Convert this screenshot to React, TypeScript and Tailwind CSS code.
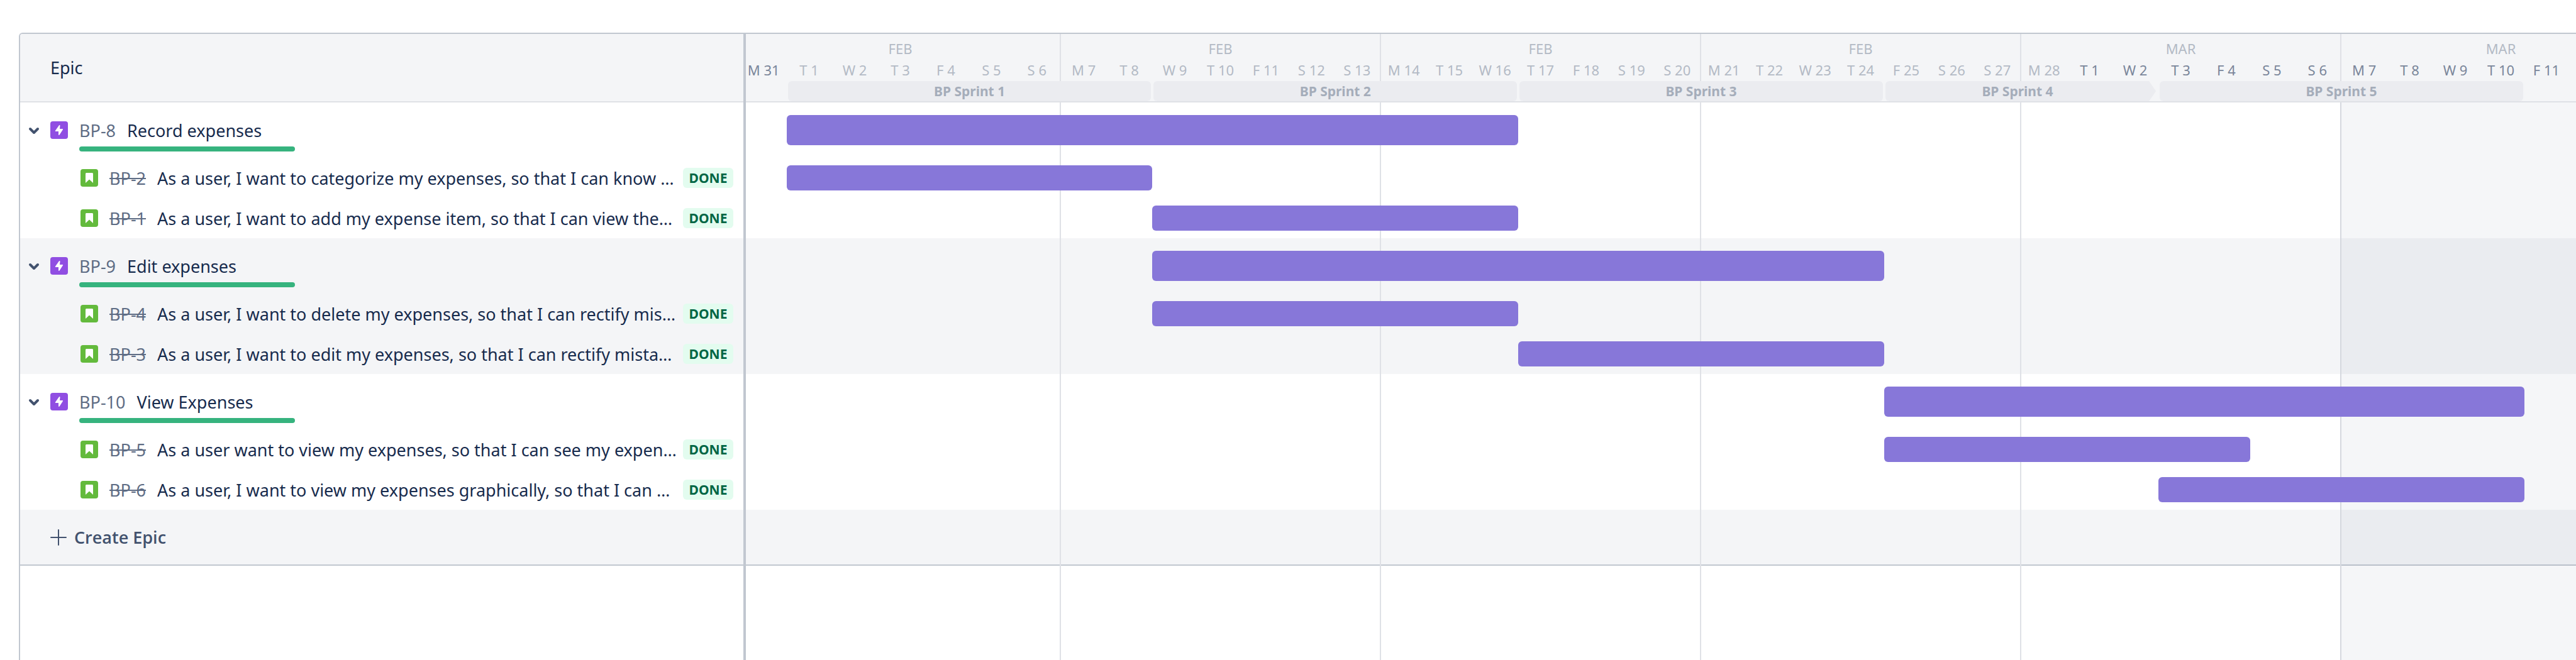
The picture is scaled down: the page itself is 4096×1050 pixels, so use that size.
type Issue = { id: string; title: string; start: number; days: number };
type EpicGroup = Issue & { stories: Issue[] };

// `start` counts days from Monday 31 January, the first column of the track.
const epics: EpicGroup[] = [
  {
    id: 'BP-8', title: 'Record expenses', start: 1, days: 16,
    stories: [
      { id: 'BP-2', title: 'As a user, I want to categorize my expenses, so that I can know …', start: 1, days: 8 },
      { id: 'BP-1', title: 'As a user, I want to add my expense item, so that I can view the…', start: 9, days: 8 },
    ],
  },
  {
    id: 'BP-9', title: 'Edit expenses', start: 9, days: 16,
    stories: [
      { id: 'BP-4', title: 'As a user, I want to delete my expenses, so that I can rectify mis…', start: 9, days: 8 },
      { id: 'BP-3', title: 'As a user, I want to edit my expenses, so that I can rectify mista…', start: 17, days: 8 },
    ],
  },
  {
    id: 'BP-10', title: 'View Expenses', start: 25, days: 14,
    stories: [
      { id: 'BP-5', title: 'As a user want to view my expenses, so that I can see my expen…', start: 25, days: 8 },
      { id: 'BP-6', title: 'As a user, I want to view my expenses graphically, so that I can …', start: 31, days: 8 },
    ],
  },
];

const weeks = [
  { month: 'FEB', days: ['31', '1', '2', '3', '4', '5', '6'] },
  { month: 'FEB', days: ['7', '8', '9', '10', '11', '12', '13'] },
  { month: 'FEB', days: ['14', '15', '16', '17', '18', '19', '20'] },
  { month: 'FEB', days: ['21', '22', '23', '24', '25', '26', '27'] },
  { month: 'MAR', days: ['28', '1', '2', '3', '4', '5', '6'] },
  { month: 'MAR', days: ['7', '8', '9', '10', '11'] },
];
const weekdays = ['M', 'T', 'W', 'T', 'F', 'S', 'S'];

const sprints = [
  { name: 'BP Sprint 1', start: 1, days: 8 },
  { name: 'BP Sprint 2', start: 9, days: 8 },
  { name: 'BP Sprint 3', start: 17, days: 8 },
  { name: 'BP Sprint 4', start: 25, days: 6, cut: true },
  { name: 'BP Sprint 5', start: 31, days: 8 },
];

const isFebruary = (day: number) => day >= 1 && day <= 28;
const column = (start: number, days: number) => ({ gridColumn: `${start + 1} / span ${days}` });

function ChevronIcon() {
  return (
    <svg width="20" height="20" viewBox="0 0 20 20" fill="none" stroke="#42526E" strokeWidth="4" strokeLinecap="round" strokeLinejoin="round" aria-hidden="true">
      <path d="M4 8 10 14 16 8" />
    </svg>
  );
}

function EpicIcon() {
  return (
    <svg className="shrink-0" width="28" height="28" viewBox="0 0 28 28" aria-hidden="true">
      <rect width="28" height="28" rx="4" fill="#904EE2" />
      <path d="M14 6.300c.6-.6 1.500-.3 1.500.5L15 12h4.200c.8 0 1.100.7.7 1.300l-5.300 8.300c-.5.7-1.600.4-1.600-.4V16H8.700c-.8 0-1.100-.7-.7-1.300z" fill="#fff" />
    </svg>
  );
}

function StoryIcon() {
  return (
    <svg className="shrink-0" width="28" height="28" viewBox="0 0 28 28" aria-hidden="true">
      <rect width="28" height="28" rx="4" fill="#63BA3C" />
      <path d="M9.500 6h9c.8 0 1.500.7 1.500 1.500V22l-6-5.500L8 22V7.500C8 6.700 8.700 6 9.500 6z" fill="#fff" />
    </svg>
  );
}

function EpicRow({ epic }: { epic: Issue }) {
  return (
    <div className="flex h-[88px] items-start pt-6 pl-3">
      <button type="button" aria-label={`Collapse ${epic.id}`} className="flex h-10 w-5 items-center">
        <ChevronIcon />
      </button>
      <div className="ml-4 flex h-10 items-center">
        <EpicIcon />
      </div>
      <div className="ml-[18px] flex-1">
        <div className="flex h-10 items-center gap-[18px] whitespace-nowrap">
          <a href="#" className="text-[#5E6C84]">{epic.id}</a>
          <span>{epic.title}</span>
        </div>
        <div role="progressbar" aria-label={`${epic.id} progress`} aria-valuenow={100} className="mt-1.5 h-2 w-[343px] rounded bg-[#36B37E]" />
      </div>
    </div>
  );
}

function StoryRow({ story }: { story: Issue }) {
  return (
    <div className="flex h-16 items-center pr-4 pl-24">
      <StoryIcon />
      <a href="#" className="ml-[18px] text-[#5E6C84] line-through">{story.id}</a>
      <span className="ml-[18px] flex-1 whitespace-nowrap">{story.title}</span>
      <span className="flex h-8 w-20 items-center justify-center rounded-md bg-[#E3FCEF] text-[21px] font-bold text-[#006644]">DONE</span>
    </div>
  );
}

function Bar({ item, epic = false }: { item: Issue; epic?: boolean }) {
  return (
    <div className={`grid grid-cols-[repeat(42,minmax(0,1fr))] items-center ${epic ? 'h-[88px]' : 'h-16'}`}>
      <div
        title={item.id}
        style={column(item.start, item.days)}
        className={`relative rounded-md bg-[#8777D9] ${epic ? 'h-12' : 'h-10'}`}
      />
    </div>
  );
}

function EpicPanel() {
  return (
    <section aria-label="Epics" className="flex w-[1152px] shrink-0 flex-col overflow-hidden rounded-tl-md border-t-2 border-l-2 border-[#C1C7D0]">
      <div className="flex h-[109px] items-center border-b-2 border-[#DFE1E6] bg-[#F4F5F7] pl-12">Epic</div>
      {epics.map((epic, i) => (
        <div key={epic.id} className={i % 2 ? 'bg-[#F4F5F7]' : 'bg-white'}>
          <EpicRow epic={epic} />
          {epic.stories.map((story) => <StoryRow key={story.id} story={story} />)}
        </div>
      ))}
      <div className="flex h-[89px] items-center border-b-2 border-[#C1C7D0] bg-[#F4F5F7] pl-12">
        <button type="button" className="flex items-center gap-3 font-['Open_Sans',sans-serif] font-semibold text-[#42526E]">
          <svg width="26" height="26" viewBox="0 0 26 26" stroke="#42526E" strokeWidth="2" strokeLinecap="round" aria-hidden="true">
            <path d="M13 1v24M1 13h24" />
          </svg>
          Create Epic
        </button>
      </div>
    </section>
  );
}

function TimelineHeader() {
  return (
    <div className="border-b-2 border-[#DFE1E6] bg-[#F4F5F7]">
      <div className="grid grid-cols-6">
        {weeks.map((week, w) => (
          <div key={w} className="border-r-2 border-[#DFE1E6] pt-[7px] text-[22px]">
            <div className="flex h-8 items-center justify-center text-[#B3BAC5]">{week.month}</div>
            <div className="grid h-9 grid-cols-7 items-center text-center whitespace-nowrap">
              {week.days.map((day, d) => (
                <span key={day} className={isFebruary(w * 7 + d) ? 'text-[#B3BAC5]' : 'text-[#7A869A]'}>
                  {weekdays[d]} {day}
                </span>
              ))}
            </div>
          </div>
        ))}
      </div>
      <div className="grid grid-cols-[repeat(42,minmax(0,1fr))]">
        {sprints.map((sprint) => (
          <div
            key={sprint.name}
            style={column(sprint.start, sprint.days)}
            className={`mx-0.5 flex h-8 items-center justify-center rounded-md bg-[#EBECF0] text-[21px] font-bold text-[#A5ADBA] ${
              sprint.cut ? 'pr-3 [clip-path:polygon(0_0,calc(100%-13px)_0,calc(100%-2px)_50%,calc(100%-13px)_100%,0_100%)]' : ''
            }`}
          >
            {sprint.name}
          </div>
        ))}
      </div>
    </div>
  );
}

function WeekLines() {
  return (
    <div aria-hidden="true" className="absolute inset-y-0 -left-0.5 grid w-full grid-cols-6">
      {weeks.map((_, w) => (
        <div key={w} className={`border-l-2 ${w === 5 ? 'border-[#D5D8DF] bg-[#091E42]/4' : 'border-[#DFE1E6]'}`} />
      ))}
    </div>
  );
}

function Timeline() {
  return (
    <section aria-label="Timeline" className="flex min-w-0 flex-1 overflow-hidden border-t-2 border-[#C1C7D0]">
      <div className="-ml-2 flex w-[3054px] shrink-0 flex-col">
        <TimelineHeader />
        <div className="relative flex-1">
          {epics.map((epic, i) => (
            <div key={epic.id} className={`h-[216px] ${i % 2 ? 'bg-[#F4F5F7]' : 'bg-white'}`} />
          ))}
          <div className="h-[89px] border-b-2 border-[#C1C7D0] bg-[#F4F5F7]" />
          <WeekLines />
          <div className="absolute inset-x-0 top-0">
            {epics.map((epic) => (
              <div key={epic.id}>
                <Bar item={epic} epic />
                {epic.stories.map((story) => <Bar key={story.id} item={story} />)}
              </div>
            ))}
          </div>
        </div>
      </div>
    </section>
  );
}

export default function App() {
  return (
    <main className="flex min-h-screen bg-white pt-[52px] pl-[30px] font-['Noto_Sans',sans-serif] text-[27px] leading-none text-[#172B4D]">
      <EpicPanel />
      <div className="w-1 shrink-0 bg-[#C1C7D0]" />
      <Timeline />
    </main>
  );
}
